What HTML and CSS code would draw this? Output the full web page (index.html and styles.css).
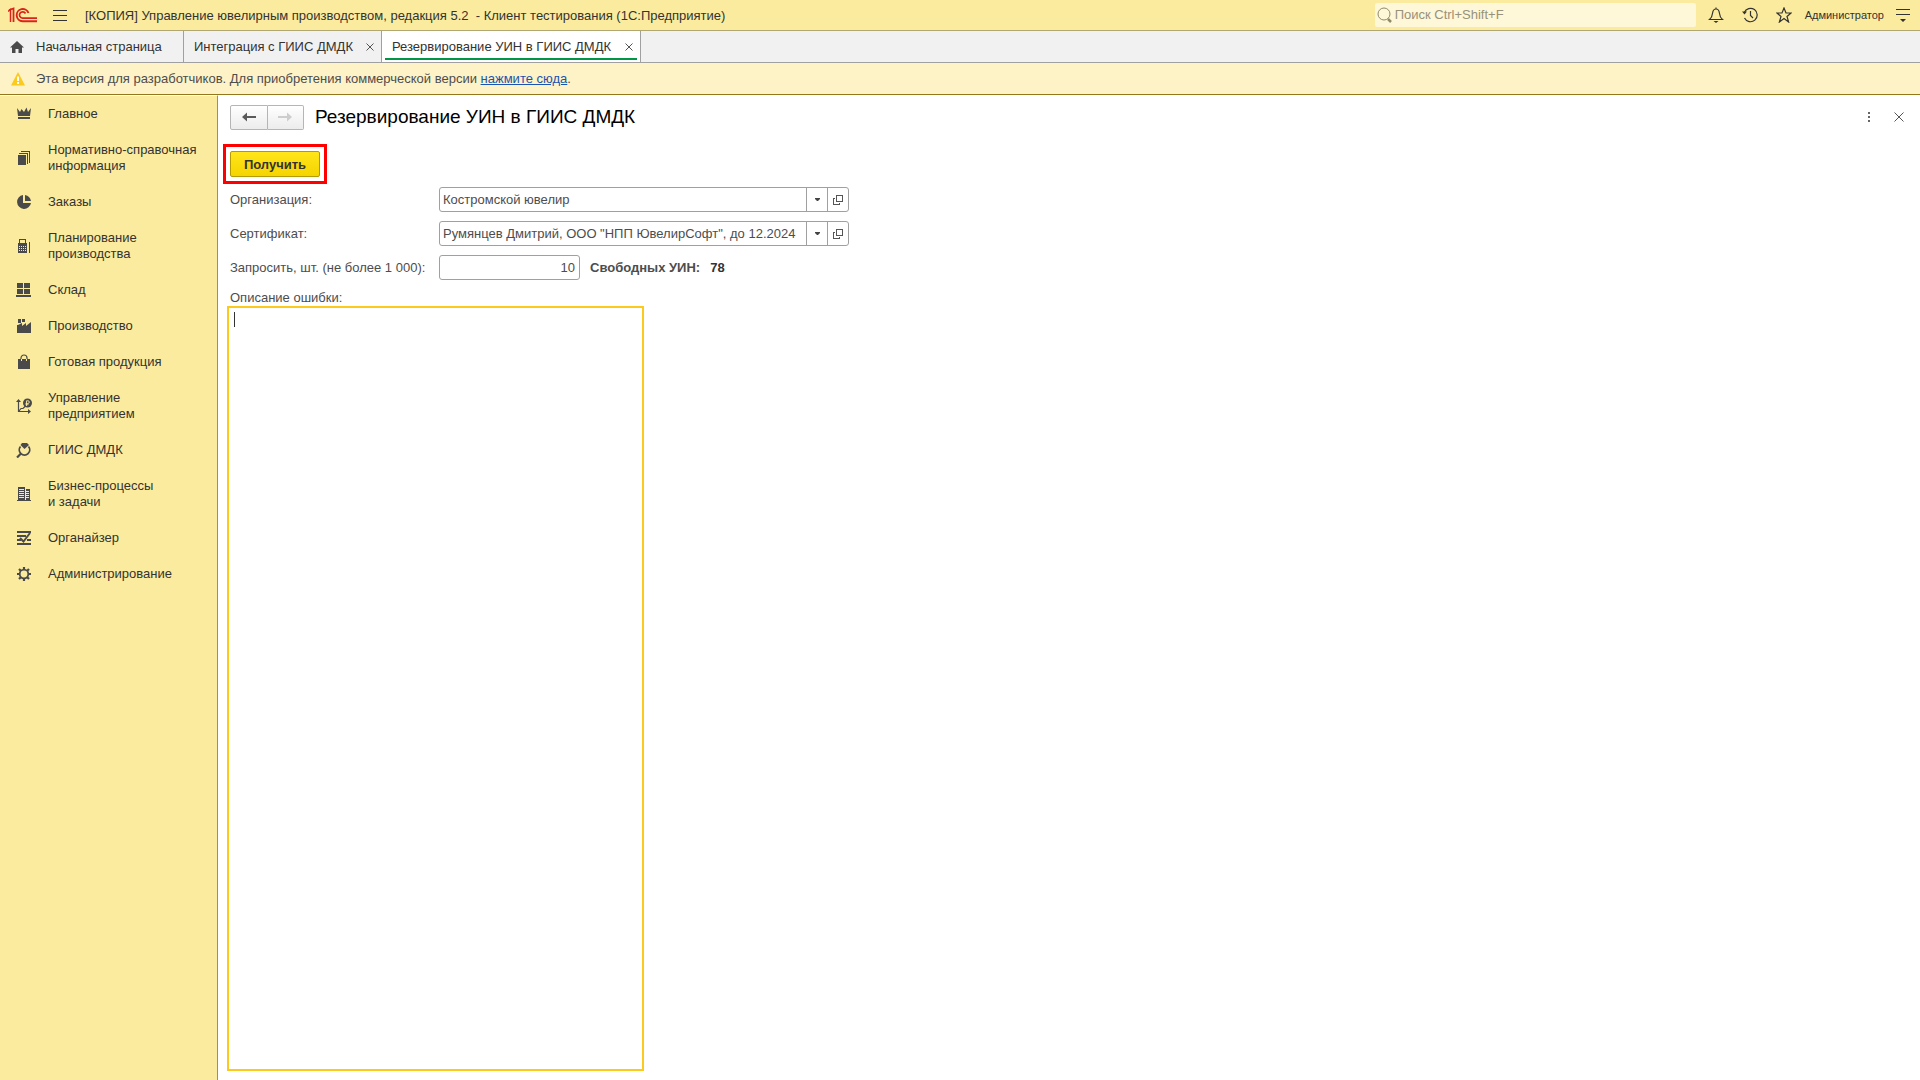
FILE: index.html
```html
<!DOCTYPE html>
<html lang="ru">
<head>
<meta charset="utf-8">
<title>Резервирование УИН в ГИИС ДМДК</title>
<link rel="stylesheet" href="styles.css">
</head>
<body>
<header class="topbar">
  <svg class="logo" width="30" height="16" viewBox="0 0 30 16" fill="none" stroke="#d9241c">
    <path d="M0 4.500L2.500 2.500V15" stroke-width="1.500"/>
    <path d="M1 3L5.500 1.500V15" stroke-width="1.800"/>
    <path d="M20.500 6A6.100 6.100 0 1 0 14.500 14.200H29" stroke-width="1.900"/>
    <path d="M17.500 6.500A3.200 3.200 0 1 0 14.500 11.200H29" stroke-width="1.700"/>
  </svg>
  <button class="icon-btn menu-btn" aria-label="Меню">
    <svg width="14" height="12" viewBox="0 0 14 12" fill="#333" shape-rendering="crispEdges"><path d="M0 1h14v1H0zM0 6h14v1H0zM0 11h14v1H0z"/></svg>
  </button>
  <span class="app-title">[КОПИЯ] Управление ювелирным производством, редакция 5.2&nbsp; - Клиент тестирования (1С:Предприятие)</span>
  <label class="search">
    <svg width="16" height="16" viewBox="0 0 16 16" fill="none" stroke="#8f8a68"><circle cx="7" cy="7" r="6"/><path d="M11 12l3 3" stroke-width="2.500"/></svg>
    <input class="search-input" type="text" placeholder="Поиск Ctrl+Shift+F" aria-label="Поиск">
  </label>
  <div class="top-actions">
    <button class="icon-btn" aria-label="Уведомления">
      <svg width="16" height="16" viewBox="0 0 16 16" fill="none" stroke="#333" stroke-width="1.200"><path d="M8 2V.5M1.500 12.500C4 10.500 4.300 9 4.600 6 4.900 3.500 6.400 2 8 2s3.100 1.500 3.400 4c.3 3 .6 4.500 3.100 6.500z"/><path d="M5.500 14h5l-2.500 2z" fill="#333" stroke="none"/></svg>
    </button>
    <button class="icon-btn" aria-label="История">
      <svg width="16" height="16" viewBox="0 0 16 16" fill="none" stroke="#333" stroke-width="1.200"><path d="M2.300 5.500A6.700 6.700 0 1 1 2.500 11"/><path d="M8.500 4v4.500L11 11"/><path d="M0 4.500h5L2.500 7.500z" fill="#333" stroke="none"/></svg>
    </button>
    <button class="icon-btn" aria-label="Избранное">
      <svg width="16" height="16" viewBox="0 0 16 16" fill="none" stroke="#333" stroke-width="1.200"><path d="M8 1l2 5h5l-4 3.500L12.600 15 8 11.600 3.400 15 5 9.500 1 6h5z"/></svg>
    </button>
    <a class="user" href="#">Администратор</a>
    <button class="icon-btn" aria-label="Настройки">
      <svg width="14" height="14" viewBox="0 0 14 14" fill="#333"><path d="M0 1h14v1H0zM0 6h14v1H0zM4 11h6l-3 3z"/></svg>
    </button>
  </div>
</header>

<nav class="tabs" aria-label="Открытые окна">
  <a class="tab tab-home" href="#">
    <svg width="14" height="12" viewBox="0 0 14 12" fill="#4a4a4a"><path d="M7 0l7 6.500h-2V12H8.500V8h-3v4H2V6.500H0z"/></svg>
    <span>Начальная страница</span>
  </a>
  <div class="tab tab-short">
    <a class="tab-link" href="#">Интеграция с ГИИС ДМДК</a>
    <button class="icon-btn" aria-label="Закрыть"><svg width="8" height="8" viewBox="0 0 8 8" stroke="#555"><path d="M.5.5l7 7M7.500.5l-7 7"/></svg></button>
  </div>
  <div class="tab tab-long tab-active">
    <a class="tab-link" href="#">Резервирование УИН в ГИИС ДМДК</a>
    <button class="icon-btn" aria-label="Закрыть"><svg width="8" height="8" viewBox="0 0 8 8" stroke="#555"><path d="M.5.5l7 7M7.500.5l-7 7"/></svg></button>
  </div>
</nav>

<div class="notice">
  <svg width="14" height="14" viewBox="0 0 14 14"><path d="M7 0l7 13.500H0z" fill="#fbca1c"/><path d="M6 4.500h2v4.500H6zM6 10h2v2H6z" fill="#fff"/></svg>
  <p class="notice-text">Эта версия для разработчиков. Для приобретения коммерческой версии <a class="notice-link" href="#">нажмите сюда</a>.</p>
</div>

<div class="workspace">
  <nav class="sidebar" aria-label="Разделы">
    <a class="section" href="#"><svg width="16" height="16" viewBox="0 0 16 16"><path d="M1 2l3 4 1.500-3L8 6l2.500-4.500L12 6l3-4-1 8H2zM2 11h12v2H2z"/></svg><span>Главное</span></a>
    <a class="section" href="#"><svg width="16" height="16" viewBox="0 0 16 16" shape-rendering="crispEdges"><path d="M2 5h8v10H2zM3 3h9v11h-1V4H3zM5 1h9v12h-1V2H5z"/></svg><span>Нормативно-справочная<br>информация</span></a>
    <a class="section" href="#"><svg width="16" height="16" viewBox="0 0 16 16"><path d="M7 1v8h8A7 7 0 1 1 7 1zM9 1q5 1 6 6H9z"/></svg><span>Заказы</span></a>
    <a class="section" href="#"><svg width="16" height="16" viewBox="0 0 16 16" shape-rendering="crispEdges"><path d="M3 1h7v4h1v10H2V5h1zM4 2v3h5V2zM13 4h1v11h-1z" fill-rule="evenodd"/><path d="M3 8h1v1H3zM5 8h1v1H5zM7 8h1v1H7zM9 8h1v1H9zM3 10h1v1H3zM5 10h1v1H5zM7 10h1v1H7zM9 10h1v1H9zM3 12h1v1H3zM5 12h1v1H5zM7 12h1v1H7zM9 12h1v1H9z" fill="#fbeb9e"/></svg><span>Планирование<br>производства</span></a>
    <a class="section" href="#"><svg width="16" height="16" viewBox="0 0 16 16" shape-rendering="crispEdges"><path d="M1 1h6v5H1zM8 1h6v5H8zM1 7h6v5H1zM8 7h6v5H8zM0 13h15v2H0z"/></svg><span>Склад</span></a>
    <a class="section" href="#"><svg width="16" height="16" viewBox="0 0 16 16"><path d="M2 1h3v4H2zM6 1h3v3H6zM1 15V7h1l4-2v3l4-3v3l5-4v11z"/></svg><span>Производство</span></a>
    <a class="section" href="#"><svg width="16" height="16" viewBox="0 0 16 16"><path d="M2 5h12v10H2z"/><path d="M5 7V4a3 3 0 0 1 6 0v3" fill="none" stroke="#4a4a4a" stroke-width="1.200"/><path d="M5.500 5v2M10.500 5v2" stroke="#fbeb9e"/></svg><span>Готовая продукция</span></a>
    <a class="section" href="#"><svg width="16" height="16" viewBox="0 0 16 16"><path d="M0 4L2.500 1 5 4zM12 11l3 2.500-3 2.500z"/><path d="M2.500 3v10.500H13M3 13l2-2.500h2l2-2" fill="none" stroke="#4a4a4a" stroke-width="1.200"/><circle cx="11.500" cy="5" r="4.500"/><path d="M10.500 8V2.800h1.500a1.200 1.200 0 0 1 0 2.600H9.500M9.500 6.700h3" fill="none" stroke="#fbeb9e" stroke-width=".9"/></svg><span>Управление<br>предприятием</span></a>
    <a class="section" href="#"><svg width="16" height="16" viewBox="0 0 16 16"><path d="M6 1h5l2 2-4.500 4L4.500 3z"/><path d="M4.500 4.500a5.200 5.200 0 1 0 8 0" fill="none" stroke="#4a4a4a" stroke-width="1.800"/><path d="M5 11.500L1 15.500" stroke="#4a4a4a" stroke-width="2.200"/></svg><span>ГИИС ДМДК</span></a>
    <a class="section" href="#"><svg width="16" height="16" viewBox="0 0 16 16" shape-rendering="crispEdges"><path d="M2 1h7v13H2zM10 3h4v11h-4zM1 14h14v1H1z"/><path d="M3 3h5v1H3zM3 5h5v1H3zM3 7h5v1H3zM3 9h5v1H3zM3 11h5v1H3zM10 5h3v1h-3zM10 7h3v1h-3zM10 9h3v1h-3zM10 11h3v1h-3z" fill="#fbeb9e"/></svg><span>Бизнес-процессы<br>и задачи</span></a>
    <a class="section" href="#"><svg width="16" height="16" viewBox="0 0 16 16"><path d="M1 1h14v2H1zM1 5h9v2H1zM1 9h4v2H1zM11 9h4v2h-4zM1 13h14v2H1z"/><path d="M4 8l3.500 3.500L14 3" fill="none" stroke="#4a4a4a" stroke-width="2"/></svg><span>Органайзер</span></a>
    <a class="section" href="#"><svg width="16" height="16" viewBox="0 0 16 16" fill="none" stroke="#4a4a4a"><circle cx="8" cy="8" r="4.300" stroke-width="1.800"/><path d="M8 1v2.500M8 12.500V15M1 8h2.500M12.500 8H15M3 3l2 2M11 11l2 2M13 3l-2 2M5 11l-2 2" stroke-width="2.200"/></svg><span>Администрирование</span></a>
  </nav>

  <main class="form">
    <div class="form-head">
      <div class="history">
        <button class="history-btn" aria-label="Назад"><svg width="14" height="10" viewBox="0 0 14 10"><path d="M0 5l5-4.500V4h9v2H5v3.500z" fill="#5a5a5a"/></svg></button>
        <button class="history-btn" aria-label="Вперёд" disabled><svg width="14" height="10" viewBox="0 0 14 10"><path d="M14 5L9 .5V4H0v2h9v3.500z" fill="#cdcdcd"/></svg></button>
      </div>
      <h1 class="form-title">Резервирование УИН в ГИИС ДМДК</h1>
      <button class="icon-btn" aria-label="Ещё"><svg width="4" height="12" viewBox="0 0 4 12" shape-rendering="crispEdges" fill="#666"><path d="M2 1h2v2H2zM2 5h2v2H2zM2 9h2v2H2z"/></svg></button>
      <button class="icon-btn" aria-label="Закрыть форму"><svg width="10" height="10" viewBox="0 0 10 10" stroke="#555"><path d="M.5.5l9 9M9.500.5l-9 9"/></svg></button>
    </div>
    <div class="marker"><button class="primary">Получить</button></div>
    <div class="fields">
      <label for="org">Организация:</label>
      <div class="combo">
        <input class="combo-input" id="org" type="text" value="Костромской ювелир">
        <button class="combo-btn" aria-label="Выбрать"><svg width="5" height="3" viewBox="0 0 5 3"><path d="M0 0h5v1L3 3H2L0 1z" fill="#444"/></svg></button>
        <button class="combo-btn" aria-label="Открыть"><svg width="10" height="10" viewBox="0 0 10 10" fill="none" stroke="#555" shape-rendering="crispEdges"><path d="M3.500.5h6v6h-6zM2 3.500H.5v6h6V8"/></svg></button>
      </div>
      <label for="cert">Сертификат:</label>
      <div class="combo">
        <input class="combo-input" id="cert" type="text" value="Румянцев Дмитрий, ООО &quot;НПП ЮвелирСофт&quot;, до 12.2024">
        <button class="combo-btn" aria-label="Выбрать"><svg width="5" height="3" viewBox="0 0 5 3"><path d="M0 0h5v1L3 3H2L0 1z" fill="#444"/></svg></button>
        <button class="combo-btn" aria-label="Открыть"><svg width="10" height="10" viewBox="0 0 10 10" fill="none" stroke="#555" shape-rendering="crispEdges"><path d="M3.500.5h6v6h-6zM2 3.500H.5v6h6V8"/></svg></button>
      </div>
      <label for="count">Запросить, шт. (не более 1 000):</label>
      <div class="count-row">
        <input class="count" id="count" type="text" value="10">
        <span class="free">Свободных УИН:</span>
        <output class="free-value">78</output>
      </div>
    </div>
    <label class="error-label" for="error">Описание ошибки:</label>
    <div class="error-box">
      <textarea class="error-text" id="error"></textarea>
      <span class="caret"></span>
    </div>
  </main>
</div>
</body>
</html>
```

FILE: styles.css
```css
* { box-sizing: border-box; }

body {
  display: flex;
  flex-direction: column;
  min-height: 100vh;
  margin: 0;
  background: #fff;
  color: #4d4d4d;
  font: 13px/16px "Liberation Sans", Arial, sans-serif;
}

button, input, textarea { margin: 0; font: inherit; color: inherit; }
a { color: inherit; text-decoration: none; }
svg { display: block; flex: none; }

.icon-btn {
  display: flex;
  padding: 0;
  border: 0;
  background: none;
}

/* top bar */
.topbar {
  display: flex;
  align-items: center;
  height: 31px;
  padding: 0 10px 0 8px;
  border-bottom: 1px solid #b0a772;
  background: #fbeb9e;
  color: #333;
}
.menu-btn { margin: 0 18px 0 15px; }
.app-title { flex: 1; padding-top: 1px; white-space: nowrap; }
.search {
  display: flex;
  align-items: center;
  width: 321px;
  height: 24px;
  padding-left: 2px;
  border-radius: 2px;
  background: #fef7d8;
}
.search-input {
  flex: 1;
  min-width: 0;
  padding: 0 2px;
  border: 0;
  background: none;
}
.search-input::placeholder { color: #97927a; opacity: 1; }
.top-actions {
  display: flex;
  align-items: center;
  gap: 18px;
  padding-left: 12px;
}
.user { margin: 0 -6px 0 -5px; font-size: 11px; }

/* tabs */
.tabs {
  display: flex;
  height: 32px;
  border-bottom: 1px solid #a0a0a0;
  background: #f1f1f1;
  color: #333;
}
.tab {
  display: flex;
  align-items: center;
  justify-content: space-between;
  gap: 10px;
  padding: 0 7px 0 10px;
  border-right: 1px solid #a0a0a0;
  white-space: nowrap;
}
.tab-home { justify-content: flex-start; gap: 12px; min-width: 184px; }
.tab-short { min-width: 198px; }
.tab-long { min-width: 259px; }
.tab-active {
  background: linear-gradient(#009646, #009646) center 27px / calc(100% - 6px) 2px no-repeat #fff;
}

/* notice */
.notice {
  display: flex;
  align-items: center;
  gap: 11px;
  height: 32px;
  padding-left: 11px;
  border-bottom: 1px solid #94771b;
  background: #fef2c7;
}
.notice-text { margin: 0; }
.notice-link { color: #1a54b0; text-decoration: underline; }

/* sections */
.workspace { display: flex; flex: 1; }
.sidebar {
  width: 218px;
  flex: none;
  border-top: 1px solid #fff;
  border-right: 1px solid #9b935f;
  background: #fbeb9e;
  color: #333;
}
.section {
  display: flex;
  align-items: center;
  gap: 16px;
  padding: 10px 0 10px 16px;
}
.section svg { fill: #4a4a4a; }
.section svg[fill="none"] { fill: none; }

/* form */
.form {
  display: flex;
  flex: 1;
  flex-direction: column;
  min-width: 0;
  padding: 10px 16px 9px 12px;
}
.form-head { display: flex; align-items: center; height: 24px; gap: 24px; }
.history { display: flex; width: 74px; height: 25px; }
.history-btn {
  display: flex;
  flex: 1;
  align-items: center;
  justify-content: center;
  padding: 0;
  border: 1px solid #b5b5b5;
  border-radius: 2px 0 0 2px;
  background: linear-gradient(#fff, #ececec);
}
.history-btn + .history-btn { border-left: 0; border-radius: 0 2px 2px 0; }
.form-title {
  flex: 1;
  margin: 0 0 0 -13px;
  color: #000;
  font-size: 19px;
  font-weight: 400;
  line-height: 24px;
}
.marker {
  align-self: flex-start;
  margin: 15px 0 3px -7px;
  padding: 4px;
  border: 3px solid #fe0000;
}
.primary {
  display: block;
  width: 90px;
  height: 26px;
  padding: 1px 0 0;
  border: 1px solid #b39b00;
  border-radius: 2px;
  background: linear-gradient(#ffe51a, #f5d400);
  color: #333;
  font-weight: 700;
}
.fields {
  display: grid;
  grid-template-columns: 209px 410px;
  grid-auto-rows: 25px;
  row-gap: 9px;
  align-items: center;
}
.combo {
  display: flex;
  height: 25px;
  border: 1px solid #a0a0a0;
  border-radius: 3px;
}
.combo-input {
  flex: 1;
  min-width: 0;
  padding: 0 2px 0 3px;
  border: 0;
  background: none;
}
.combo-btn {
  display: flex;
  width: 21px;
  align-items: center;
  justify-content: center;
  padding: 0;
  border: 0;
  border-left: 1px solid #a0a0a0;
  background: none;
}
.count-row { display: flex; align-items: center; gap: 10px; font-weight: 700; }
.count {
  width: 141px;
  height: 25px;
  padding: 0 4px;
  border: 1px solid #a0a0a0;
  border-radius: 3px;
  font-weight: 400;
  text-align: right;
}
.free-value { color: #333; }
.error-label { margin-top: 10px; }
.error-box {
  position: relative;
  display: flex;
  flex: 1;
  width: 417px;
  margin-left: -3px;
}
.error-text {
  flex: 1;
  padding: 4px 6px;
  border: 2px solid #fbca1c;
  outline: 0;
  background: #fff;
  resize: none;
}
.caret {
  position: absolute;
  top: 6px;
  left: 7px;
  width: 1px;
  height: 15px;
  background: #333;
}
```
